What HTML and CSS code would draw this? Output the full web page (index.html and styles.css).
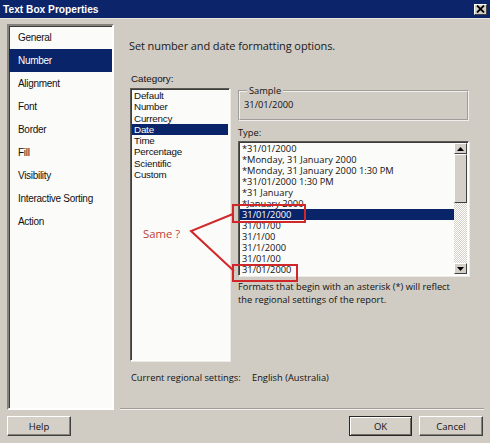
FILE: index.html
```html
<!DOCTYPE html>
<html>
<head>
<meta charset="utf-8">
<link rel="stylesheet" href="styles.css">
</head>
<body>
<div class="dialog">
  <div class="titlebar">
    <span class="title">Text Box Properties</span>
    <span class="close"><svg width="9" height="8" viewBox="0 0 9 8"><path d="M1 0.5 L8 7.5 M8 0.5 L1 7.5" stroke="#000" stroke-width="1.8"/></svg></span>
  </div>
  <div class="main">
    <ul class="nav">
      <li>General</li>
      <li class="sel">Number</li>
      <li>Alignment</li>
      <li>Font</li>
      <li>Border</li>
      <li>Fill</li>
      <li>Visibility</li>
      <li>Interactive Sorting</li>
      <li>Action</li>
    </ul>
    <div class="pane">
      <h1 class="header">Set number and date formatting options.</h1>
      <div class="cols">
        <div class="catcol">
          <div class="catlabel">Category:</div>
          <ul class="catlist">
            <li>Default</li>
            <li>Number</li>
            <li>Currency</li>
            <li class="sel">Date</li>
            <li>Time</li>
            <li>Percentage</li>
            <li>Scientific</li>
            <li>Custom</li>
          </ul>
        </div>
        <div class="typecol">
          <fieldset class="sample">
            <legend>Sample</legend>
            <div class="samplevalue">31/01/2000</div>
          </fieldset>
          <div class="typelabel">Type:</div>
          <div class="typelist">
            <ul>
              <li>*31/01/2000</li>
              <li>*Monday, 31 January 2000</li>
              <li>*Monday, 31 January 2000 1:30 PM</li>
              <li>*31/01/2000 1:30 PM</li>
              <li>*31 January</li>
              <li>*January 2000</li>
              <li class="sel">31/01/2000</li>
              <li>31/01/00</li>
              <li>31/1/00</li>
              <li>31/1/2000</li>
              <li>31/01/00</li>
              <li>31/01/2000</li>
            </ul>
            <div class="scrollbar">
              <div class="sbbtn"><svg width="7" height="4" viewBox="0 0 7 4"><path d="M0 4 L3.5 0 L7 4 Z" fill="#000"/></svg></div>
              <div class="thumb"></div>
              <div class="track"></div>
              <div class="sbbtn"><svg width="7" height="4" viewBox="0 0 7 4"><path d="M0 0 L7 0 L3.5 4 Z" fill="#000"/></svg></div>
            </div>
          </div>
          <p class="note">Formats that begin with an asterisk (*) will reflect the regional settings of the report.</p>
        </div>
      </div>
      <div class="regional">
        <span class="reglabel">Current regional settings:</span>
        <span>English (Australia)</span>
      </div>
    </div>
  </div>
  <div class="footer">
    <button class="btn help">Help</button>
    <div class="spacer"></div>
    <button class="btn ok">OK</button>
    <button class="btn">Cancel</button>
  </div>
  <svg class="annot" width="490" height="443" viewBox="0 0 490 443">
    <rect x="233" y="205" width="72" height="17" fill="none" stroke="#d0282a" stroke-width="2"/>
    <rect x="233" y="265" width="64" height="16" fill="none" stroke="#d0282a" stroke-width="2"/>
    <path d="M233 214 L191 231 L234 271" fill="none" stroke="#d0282a" stroke-width="2"/>
  </svg>
  <span class="same">Same ?</span>
</div>
</body>
</html>
```
FILE: styles.css
```css
* { box-sizing: border-box; }
html, body { margin: 0; padding: 0; }
body { background: #d0cbc3; }
.dialog {
  position: relative;
  width: 490px;
  height: 443px;
  background: #d0cbc3;
  font-family: "Open Sans", "Liberation Sans", sans-serif;
  color: #111;
  overflow: hidden;
}
.titlebar {
  height: 19px;
  background: #0c246a;
  border-bottom: 1px solid #e8e6e0;
  display: flex;
  align-items: center;
  justify-content: space-between;
  padding: 0 3px 0 3px;
}
.title {
  font-family: "Liberation Sans", Arial, sans-serif;
  font-weight: bold;
  font-size: 10.2px;
  color: #fff;
}
.close {
  width: 13px;
  height: 11px;
  background: #d4d0c8;
  border: 1px solid;
  border-color: #fff #404040 #404040 #fff;
  display: flex;
  align-items: center;
  justify-content: center;
}
.main {
  display: flex;
  padding: 5px 6px 0 7px;
  height: 391px;
}
.nav {
  list-style: none;
  margin: 0;
  padding: 0;
  width: 107px;
  background: #fbfbfa;
  border: 2px solid;
  border-color: #85827b #fff #fff #85827b;
  box-shadow: inset 1px 1px 0 #3e3c38;
  font-family: "Liberation Sans", Arial, sans-serif;
  font-size: 10px;
  letter-spacing: -0.3px;
}
.nav li {
  height: 23px;
  line-height: 23px;
  padding-left: 9px;
}
.nav li.sel {
  background: #0a246a;
  color: #fff;
}
.pane {
  flex: 1;
  margin-left: 6px;
  border-bottom: 1px solid #a29e96;
  box-shadow: 0 1px 0 #f4f2ee;
  height: 385px;
}
.header {
  margin: 14px 0 0 9px;
  font-size: 11px;
  font-weight: normal;
  line-height: 16px;
  letter-spacing: -0.1px;
  color: #1a1a1a;
}
.cols {
  display: flex;
  margin-top: 19px;
  padding-left: 10px;
  gap: 8px;
}
.catcol { width: 100px; }
.catlabel {
  font-family: "Liberation Sans", Arial, sans-serif;
  font-size: 9.8px;
  line-height: 12px;
  margin-bottom: 3px;
  padding-left: 1px;
}
.catlist {
  list-style: none;
  margin: 0;
  height: 273px;
  padding: 1px 1px 0 1px;
  background: #fbfbfa;
  border: 1px solid;
  border-color: #5b5954 #fff #fff #5b5954;
  box-shadow: inset 1px 1px 0 #3e3c38, 1px 1px 0 #ece9e4;
  font-family: "Liberation Sans", Arial, sans-serif;
  font-size: 9.8px;
  letter-spacing: -0.2px;
}
.catlist li {
  height: 11.3px;
  line-height: 11.3px;
  padding-left: 2px;
}
.catlist li.sel { background: #0a246a; color: #fff; }
.typecol { width: 231px; }
.sample {
  margin: 12px 0 0 0;
  padding: 2px 4px 6px 4px;
  border: 2px groove #f2f0ec;
  height: 36px;
  min-width: 0;
}
.sample legend {
  font-size: 9.3px;
  line-height: 12px;
  padding: 0 2px;
  margin-left: 3px;
}
.samplevalue {
  font-size: 9.3px;
  line-height: 12px;
}
.typelabel {
  font-size: 9.3px;
  line-height: 12px;
  margin-top: 6px;
  margin-bottom: 2px;
}
.typelist {
  height: 135px;
  display: flex;
  background: #fbfbfa;
  border: 1px solid;
  border-color: #5b5954 #fff #fff #5b5954;
  box-shadow: inset 1px 1px 0 #3e3c38, 1px 1px 0 #ece9e4;
  padding: 1px 1px 0 1px;
}
.typelist ul {
  list-style: none;
  margin: 0;
  padding: 0;
  flex: 1;
  font-size: 9.3px;
  overflow: hidden;
}
.typelist li {
  height: 11px;
  line-height: 11px;
  padding-left: 2px;
  white-space: nowrap;
}
.typelist li.sel { background: #0a246a; color: #fff; }
.scrollbar {
  width: 13px;
  display: flex;
  flex-direction: column;
  padding-bottom: 1px;
}
.sbbtn {
  height: 11px;
  background: #d4d0c8;
  border: 1px solid;
  border-color: #fff #404040 #404040 #fff;
  display: flex;
  align-items: center;
  justify-content: center;
}
.thumb {
  height: 49px;
  background: #d4d0c8;
  border: 1px solid;
  border-color: #fff #404040 #404040 #fff;
}
.track {
  flex: 1;
  background: repeating-conic-gradient(#fff 0 25%, #d4d0c8 0 50%) 0 0 / 2px 2px;
}
.note {
  margin: 4px 0 0 0;
  width: 222px;
  font-size: 9.3px;
  line-height: 13px;
}
.regional {
  display: flex;
  margin: 10px 0 0 11px;
  font-size: 9.3px;
  line-height: 13px;
}
.reglabel { width: 121px; }
.footer {
  display: flex;
  padding: 6px 7px 0 7px;
  gap: 7px;
}
.spacer { flex: 1; }
.btn {
  width: 64px;
  height: 20px;
  margin: 0;
  padding: 0;
  background: #d4d0c8;
  border: 1px solid;
  border-color: #fff #404040 #404040 #fff;
  box-shadow: inset -1px -1px 0 #85827b;
  font-family: "Open Sans", "Liberation Sans", sans-serif;
  font-size: 9.5px;
  color: #111;
}
.ok {
  width: 63px;
  border: 1px solid #2a2824;
  box-shadow: inset 1px 1px 0 #fff, inset -1px -1px 0 #6e6b65;
}
.annot {
  position: absolute;
  left: 0;
  top: 0;
  pointer-events: none;
}
.same {
  position: absolute;
  left: 143px;
  top: 226px;
  font-size: 11.3px;
  line-height: 16px;
  color: #c23b34;
}
```
